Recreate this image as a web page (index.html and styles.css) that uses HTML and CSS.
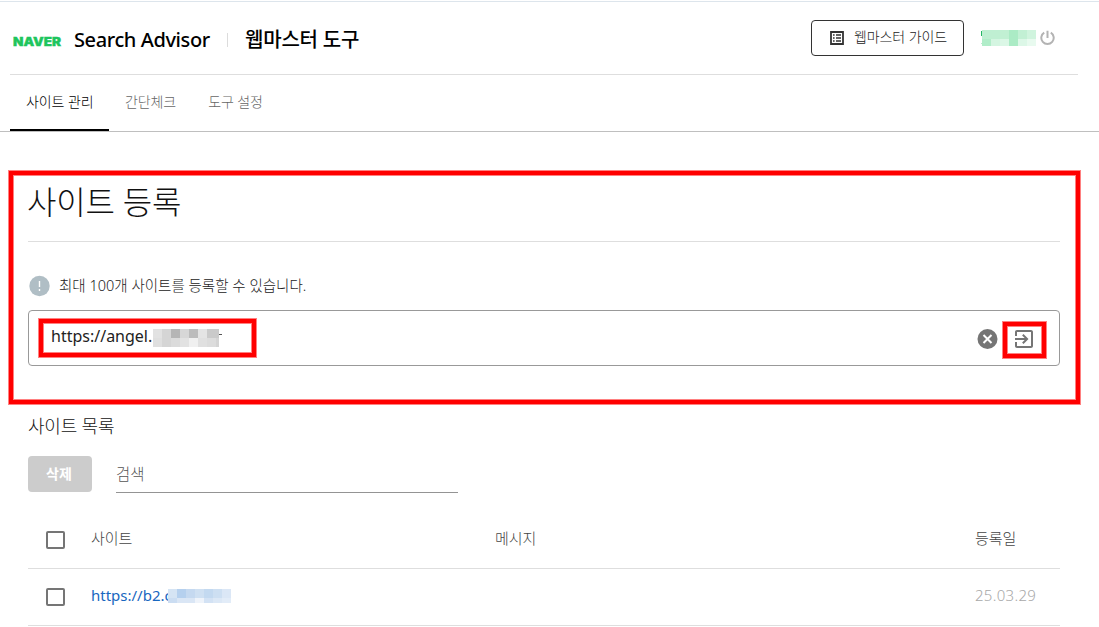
FILE: index.html
```html
<!DOCTYPE html>
<html lang="ko">
<head>
  <meta charset="UTF-8" />
  <meta name="viewport" content="width=device-width, initial-scale=1.0" />
  <title>네이버 서치어드바이저</title>
  <link rel="stylesheet" href="styles.css">
</head>
<body>

  <!-- HEADER -->
  <header class="header">
    <svg class="naver" width="49" height="12" viewBox="0 0 49 12">
      <text x="0" y="10.5" textLength="48" lengthAdjust="spacingAndGlyphs">NAVER</text>
    </svg>
    <span class="logo-text">Search Advisor</span>
    <span class="divider"></span>
    <h1 class="service-name">웹마스터 도구</h1>

    <button class="guide-btn">
      <svg width="14" height="14" viewBox="0 0 14 14">
        <path d="M1 1h12v12H1z" fill="none" stroke="#333" stroke-width="1.8" />
        <path d="M3 4h1.6M6 4h5M3 7h1.6M6 7h5M3 10h1.6M6 10h5" stroke="#333" stroke-width="1.6" />
      </svg>
      <span class="guide-label">웹마스터 가이드</span>
    </button>

    <svg class="user-name" width="56" height="16" viewBox="0 0 56 16" shape-rendering="crispEdges">
      <path d="M0 1h1v5H0z" fill="#25b765" />
      <path d="M0 13h1v1H0z" fill="#bcebd0" />
      <path d="M1 0h18v9H1z" fill="#bfefd2" />
      <path d="M19 0h9v9h-9z" fill="#c1f0d3" />
      <path d="M28 0h9v16h-9z" fill="#abebc5" />
      <path d="M37 0h9v9h-9z" fill="#c2f0d4" />
      <path d="M46 0h9v9h-9z" fill="#d0f4de" />
      <path d="M1 9h9v7H1z" fill="#b1edc9" />
      <path d="M10 9h9v7h-9z" fill="#d4f5e1" />
      <path d="M19 9h9v7h-9z" fill="#dbf7e6" />
      <path d="M37 9h9v7h-9z" fill="#dcf7e7" />
      <path d="M46 9h9v7h-9z" fill="#e8faef" />
    </svg>
    <svg class="power" width="16" height="16" viewBox="0 0 16 16">
      <path d="M7.5 .8v7.2M4.2 2.6a6.2 6.2 0 1 0 6.6 0" fill="none" stroke="#b3b3b3" stroke-width="2" />
    </svg>
  </header>

  <!-- TABS -->
  <nav class="tabs">
    <a class="tab active">사이트 관리</a>
    <a class="tab">간단체크</a>
    <a class="tab">도구 설정</a>
  </nav>

  <!-- SITE REGISTRATION -->
  <section class="register">
    <h2 class="register-title">사이트 등록</h2>
    <p class="notice">
      <svg width="22" height="22" viewBox="0 0 22 22">
        <circle cx="10.5" cy="11" r="10.2" fill="#b0bec5" />
        <path d="M10.5 6v6M10.5 14v2" stroke="#fff" stroke-width="1.4" />
      </svg>
      <span class="notice-text">최대 100개 사이트를 등록할 수 있습니다.</span>
    </p>
    <div class="url-field">
      <div class="mark mark-url">
        <span class="url-text">https://angel.</span>
        <svg width="69" height="18" viewBox="0 0 69 18" shape-rendering="crispEdges">
          <path d="M0 0h9v9H0z" fill="#e2e2e2" />
          <path d="M9 0h9v9H9z" fill="#d5d5d5" />
          <path d="M18 0h9v9h-9z" fill="#b5b5b5" />
          <path d="M27 0h9v9h-9z" fill="#d7d7d7" />
          <path d="M36 0h9v9h-9z" fill="#bcbcbc" />
          <path d="M45 0h9v9h-9z" fill="#e4e4e4" />
          <path d="M54 0h12v9H54z" fill="#cacaca" />
          <path d="M0 9h9v9H0z" fill="#dfdfdf" />
          <path d="M9 9h9v9H9z" fill="#d5d5d5" />
          <path d="M18 9h9v9h-9z" fill="#dbdbdb" />
          <path d="M27 9h9v9h-9z" fill="#e2e2e2" />
          <path d="M36 9h9v9h-9z" fill="#f0f0f0" />
          <path d="M45 9h9v9h-9z" fill="#e0e0e0" />
          <path d="M54 9h9v9h-9z" fill="#dcdcdc" />
          <path d="M63 9h3v9h-3z" fill="#d4d4d4" />
          <path d="M66 5h3v1h-3z" fill="#555" />
        </svg>
      </div>
      <svg class="clear" width="22" height="22" viewBox="0 0 22 22">
        <circle cx="11.5" cy="11" r="10" fill="#757575" />
        <path d="M7.5 7l8 8M15.5 7l-8 8" stroke="#fff" stroke-width="2" />
      </svg>
      <div class="mark mark-submit">
        <svg width="24" height="24" viewBox="0 0 24 24">
          <path d="M10.09 15.59L11.5 17l5-5-5-5-1.41 1.41L12.67 11H3v2h9.67l-2.58 2.59zM19 3H5c-1.11 0-2 .9-2 2v4h2V5h14v14H5v-4H3v4c0 1.1.89 2 2 2h14c1.1 0 2-.9 2-2V5c0-1.1-.9-2-2-2z" fill="#757575" />
        </svg>
      </div>
    </div>
  </section>

  <!-- SITE LIST -->
  <section class="list">
    <h3 class="list-title">사이트 목록</h3>
    <div class="list-tools">
      <button class="delete-btn">삭제</button>
      <div class="search">검색</div>
    </div>
    <div class="row row-head">
      <span class="checkbox"></span>
      <span class="col-site">사이트</span>
      <span class="col-message">메시지</span>
      <span class="col-date">등록일</span>
    </div>
    <div class="row">
      <span class="checkbox"></span>
      <span class="col-site link">
        <span class="site-url">https://b2.c</span>
        <svg width="63" height="14" viewBox="0 0 63 14" shape-rendering="crispEdges">
          <path d="M0 0h9v9H0z" fill="#d5e4f4" />
          <path d="M9 0h9v9H9z" fill="#b5d0ee" />
          <path d="M18 0h9v9h-9z" fill="#c5d9f0" />
          <path d="M27 0h9v9h-9z" fill="#cfe0f2" />
          <path d="M36 0h9v9h-9z" fill="#c3d9f0" />
          <path d="M45 0h9v9h-9z" fill="#cddff2" />
          <path d="M54 0h9v9h-9z" fill="#dbe7f6" />
          <path d="M0 9h9v5H0z" fill="#cbddf2" />
          <path d="M9 9h18v5H9z" fill="#dae6f5" />
          <path d="M27 9h9v5h-9z" fill="#eef3fa" />
          <path d="M36 9h9v5h-9z" fill="#d3e2f4" />
          <path d="M45 9h9v5h-9z" fill="#dce8f6" />
          <path d="M54 9h9v5h-9z" fill="#e2ecf8" />
        </svg>
      </span>
      <span class="col-message"></span>
      <span class="col-date muted">25.03.29</span>
    </div>
  </section>

</body>
</html>
```
FILE: styles.css
```css
* {
  box-sizing: border-box;
  margin: 0;
  padding: 0;
}

body {
  font-family: 'Noto Sans', 'Noto Sans CJK KR', sans-serif;
  font-weight: 300;
  font-size: 14px;
  line-height: 20px;
  background: #fff;
  color: #222;
  overflow: hidden;
}

svg {
  display: block;
  flex: none;
}

button {
  font: inherit;
  color: inherit;
}

/* --- HEADER --- */
.header {
  display: flex;
  align-items: center;
  height: 75px;
  margin: 0 21px 0 10px;
  padding: 2px 22px 0 3px;
  border-bottom: 1px solid #dedede;
}

body::before {
  content: "";
  display: block;
  height: 1px;
  margin: 1px 0 -2px;
  background: #dde5ec;
}

.naver {
  margin-top: 6px;
}

.naver text {
  font-family: 'Inter', sans-serif;
  font-size: 12px;
  font-weight: 900;
  fill: #1ec55d;
  stroke: #1ec55d;
  stroke-width: 0.4px;
}

.logo-text,
.service-name {
  font-size: 20px;
  font-weight: 500;
  line-height: 30px;
  color: #000;
  white-space: nowrap;
}

.logo-text {
  width: 137px;
  margin: 3px 0 0 12px;
  letter-spacing: -0.4px;
}

.service-name {
  margin-top: 4px;
  letter-spacing: -0.2px;
}

.divider {
  width: 1px;
  height: 14px;
  margin: 4px 17px 0 16px;
  background: #dcdcdc;
}

.guide-btn {
  display: flex;
  align-items: center;
  width: 153px;
  height: 36px;
  margin: 0 17px 0 auto;
  padding-left: 18px;
  border: 1px solid #333;
  border-radius: 4px;
  background: #fff;
}

.guide-label {
  margin: -2px 0 0 10px;
  letter-spacing: -0.1px;
  white-space: nowrap;
}

.power {
  margin: 0 0 0 3px;
}

/* --- TABS --- */
.tabs {
  display: flex;
  height: 57px;
  padding-left: 10px;
  border-bottom: 1px solid #bfbfbf;
}

.tab {
  height: 56px;
  padding: 17px 16px 0;
  color: #666;
  letter-spacing: -0.1px;
  white-space: nowrap;
}

.tab.active {
  width: 99px;
  color: #000;
  border-bottom: 2px solid #000;
}

/* --- REGISTER --- */
.register {
  width: 1071px;
  height: 233px;
  margin: 39px 0 0 9px;
  padding: 0 16px 0 15px;
  border: 4px solid #f00;
  box-shadow: 0 0 0 1px #ff8080, inset 0 0 0 1px #ff8080;
}

.register-title {
  height: 67px;
  padding-top: 3px;
  font-size: 32px;
  font-weight: 300;
  line-height: 48px;
  letter-spacing: -0.2px;
  text-indent: -1px;
  color: #111;
  border-bottom: 1px solid #dedede;
}

.notice {
  display: flex;
  align-items: center;
  height: 22px;
  margin: 33px 0 13px;
}

.notice svg {
  margin-left: 1px;
}

.notice-text {
  margin: -3px 0 0 8px;
  font-size: 14.5px;
}

.url-field {
  display: flex;
  align-items: center;
  width: 1032px;
  height: 56px;
  padding: 0 13px 0 10px;
  border: 1px solid #999;
  border-radius: 4px;
}

/* --- RED MARKS --- */
.mark {
  display: flex;
  align-items: center;
  border: 4px solid #f00;
  box-shadow: 0 0 0 1px #ff8080, inset 0 0 0 1px #ff8080;
}

.mark-url {
  width: 217px;
  height: 38px;
  padding-left: 8px;
  font-size: 16px;
  font-weight: 400;
  color: #222;
}

.url-text {
  width: 102px;
  margin-top: -4px;
}

.mark-submit {
  width: 43px;
  height: 36px;
  margin: 3px 0 0 5px;
  padding: 0 0 2px 5px;
}

.clear {
  margin: 2px 0 0 auto;
}

/* --- LIST --- */
.list {
  margin: 9px 39px 0 28px;
}

.list-title {
  font-size: 18px;
  font-weight: 300;
  line-height: 26px;
  letter-spacing: -0.2px;
  color: #111;
}

.list-tools {
  display: flex;
  margin-top: 17px;
}

.delete-btn {
  width: 64px;
  height: 36px;
  padding-right: 2px;
  border: 0;
  border-radius: 4px;
  background: #ccc;
  color: #fff;
  font-weight: 700;
}

.search {
  width: 342px;
  height: 37px;
  margin-left: 24px;
  padding-top: 8px;
  font-size: 15.5px;
  color: #555;
  border-bottom: 1px solid #949494;
}

.row {
  display: flex;
  align-items: center;
  height: 57px;
  padding-left: 18px;
  border-bottom: 1px solid #dedede;
}

.row-head {
  height: 58px;
  margin-top: 18px;
  padding-top: 1px;
  font-size: 15px;
  color: #444;
}

.checkbox {
  width: 19px;
  height: 18px;
  border: 2px solid #757575;
  border-radius: 2px;
}

.col-site,
.col-message,
.col-date {
  margin-top: -4px;
}

.col-site {
  display: flex;
  align-items: center;
  width: 404px;
  margin-left: 26px;
}

.col-message {
  width: 480px;
}

.link {
  font-size: 15px;
  font-weight: 400;
  color: #1967c0;
}

.site-url {
  flex: none;
  width: 77px;
  white-space: nowrap;
}

.link svg {
  margin-top: 2px;
}

.muted {
  font-size: 15px;
  letter-spacing: 0.3px;
  color: #a8a8a8;
}
```
